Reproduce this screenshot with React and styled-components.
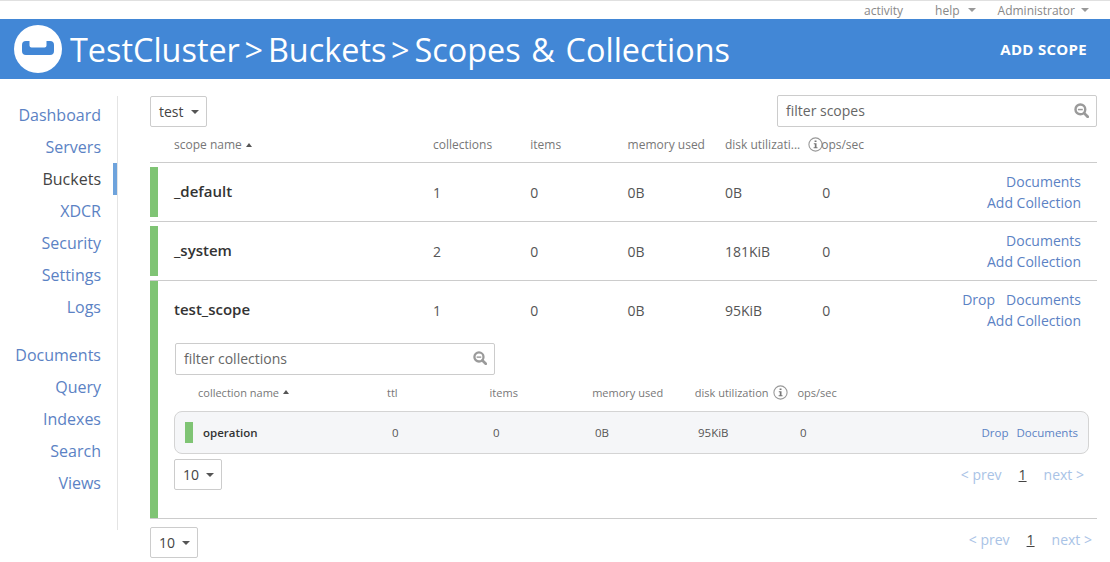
import React from "react";
import styled, { createGlobalStyle } from "styled-components";

const Global = createGlobalStyle`
  html, body { margin: 0; padding: 0; background: #fff; }
  body { font-family: "Open Sans", "Liberation Sans", sans-serif; color: #444; }
  * { box-sizing: border-box; }
`;
const Page = styled.div`width: 1110px; height: 562px; overflow: hidden; border-top: 1px solid #e0e0e0;`;
const TopBar = styled.div`height: 18px; display: flex; justify-content: flex-end; align-items: center; font-size: 12px; color: #888; padding-right: 21px;`;
const TopItem = styled.span`margin-left: ${p => p.$gap}px; display: inline-flex; align-items: center;`;
const Caret = styled.i`
  display: inline-block; width: 0; height: 0; margin-left: ${p => p.$ml ?? 7}px;
  border-left: 4px solid transparent; border-right: 4px solid transparent;
  border-top: 4px solid ${p => p.$c ?? "#555"};
`;
const SortCaret = styled.i`
  display: inline-block; width: 0; height: 0; margin-left: 4px;
  border-left: 3.5px solid transparent; border-right: 3.5px solid transparent; border-bottom: 4px solid #555;
`;
const Header = styled.header`height: 60px; background: #4287d6; display: flex; align-items: center; padding: 0 23px 0 14px; color: #fff;`;
const Title = styled.h1`margin: 0 0 0 8px; font-size: 32.4px; font-weight: 400; flex: 1; white-space: nowrap; word-spacing: 2.3px;`;
const Sep = styled.span`display: inline-block; width: 28px; text-align: center;`;
const AddScope = styled.span`font-size: 15px; font-weight: 700; letter-spacing: .3px;`;
const Body = styled.div`display: flex; padding-top: 17px;`;
const Side = styled.nav`width: 118px; height: 434px; border-right: 1px solid #e4e4e4; flex: none;`;
const Group = styled.div`margin-bottom: 16px;`;
const NavItem = styled.div`
  height: 32px; line-height: 38px; text-align: right; padding-right: 16px; font-size: 16px;
  color: ${p => p.$active ? "#444" : "#5b82c4"}; position: relative;
  ${p => p.$active && `&::after { content: ""; position: absolute; right: 0; top: 3px; width: 4px; height: 32px; background: #6ea3dc; }`}
`;
const Main = styled.main`margin-left: 32px; width: 947px;`;
const TopControls = styled.div`display: flex; justify-content: space-between; height: 31px;`;
const Select = styled.div`
  height: 31px; border: 1px solid #ccc; border-radius: 2px; display: inline-flex; align-items: center;
  padding: 0 7px 0 8px; font-size: 14px; color: #444; background: #fff;
`;
const Filter = styled.div`
  width: 320px; height: 32px; border: 1px solid #ccc; border-radius: 2px; display: flex; align-items: center;
  justify-content: space-between; padding: 0 7px 2px 8px; font-size: 14px; color: #666;
  margin-top: ${p => p.$mt ?? 0}px;
`;
const HeadRow = styled.div`
  display: grid; grid-template-columns: 259px repeat(5, 97.3px) 1fr; padding-left: 24px; height: 36px;
  align-items: center; font-size: 12px; color: #777; border-bottom: 1px solid #ccc;
`;
const HeadCell = styled.span`display: flex; align-items: center; white-space: nowrap; margin-left: ${p => p.$shift ?? 0}px;`;
const InfoWrap = styled.span`display: flex; margin-left: ${p => p.$ml}px;`;
const Scope = styled.section`display: flex; border-bottom: 1px solid #ccc; height: ${p => p.$h}px;`;
const GreenBar = styled.div`width: 8px; background: #7fc474; flex: none; margin: ${p => p.$flush ? "0" : "4px 0"};`;
const ScopeBody = styled.div`flex: 1; min-width: 0; padding: 4px 0 0 16px;`;
const ScopeRow = styled.div`
  display: grid; grid-template-columns: 259px repeat(5, 97.3px) 1fr; height: 50px; align-items: center; font-size: 14px; color: #555;
`;
const ScopeName = styled.span`font-size: 15px; font-weight: 600; color: #333; margin-top: -2px;`;
const Actions = styled.div`text-align: right; padding-right: 16px; font-size: 14px; color: #5b82c4; line-height: 21px; margin-top: -1px; white-space: nowrap;`;
const ActionLink = styled.span`margin-left: ${p => p.$gap ?? 11}px;`;
const SubFilter = styled.div`margin: 8px 0 0 1px; width: 320px;`;
const SubHead = styled.div`
  display: grid; grid-template-columns: 189px repeat(5, 102.6px); padding: 0 0 2px 24px; height: 36px; align-items: center; font-size: 11px; color: #777;
`;
const SubRow = styled.div`
  height: 43px; width: 915px; background: #f5f6f8; border: 1px solid #d4d4d4; border-radius: 8px; display: grid;
  grid-template-columns: 18px 189px 101px 102px 103px 102px 40px 1fr; align-items: center; font-size: 11.5px; color: #555; padding-left: 10px;
`;
const MiniBar = styled.span`width: 8px; height: 21px; background: #7fc474; display: block;`;
const CollName = styled.span`font-size: 11.5px; font-weight: 600; color: #333;`;
const SubActions = styled.div`text-align: right; padding-right: 10px; font-size: 11.5px; color: #5b82c4; white-space: nowrap;`;
const Footer = styled.div`display: flex; justify-content: space-between; align-items: flex-start; margin: ${p => p.$m};`;
const Pager = styled.div`font-size: 14px; color: #a9c3e6; display: flex; gap: 17px; padding-right: ${p => p.$pr}px; margin-top: ${p => p.$mt}px;`;
const Cur = styled.span`color: #444; text-decoration: underline;`;

const Search = ({ size = 15 }) => (
  <svg width={size} height={size} viewBox="0 0 16 16" fill="none" stroke="#9a9a9a">
    <circle cx="6.8" cy="6.8" r="5.2" strokeWidth="2.6" />
    <path d="M4.2 7h5.2" strokeWidth="1.6" />
    <path d="M10.8 10.8l3.800 3.800" strokeLinecap="round" strokeWidth="3" />
  </svg>
);
const Info = () => (
  <svg width="15" height="15" viewBox="0 0 15 15" fill="none">
    <circle cx="7.5" cy="7.5" r="6.6" stroke="#999" strokeWidth="1.1" />
    <path d="M6.6 3.400h1.900v1.700H6.600zM5.800 6.200h2.700v4h1v1.100H5.600v-1.100h1.200V7.300h-1z" fill="#777" />
  </svg>
);
const Logo = () => (
  <svg width="48" height="48" viewBox="0 0 48 48" style={{ flex: "none" }}>
    <circle cx="24" cy="24" r="24" fill="#fff" />
    <path d="M8 20a4 4 0 0 1 4-4h3.500v4.500a2 2 0 0 0 2 2h13a2 2 0 0 0 2-2V16H36a4 4 0 0 1 4 4v6a4 4 0 0 1-4 4H12a4 4 0 0 1-4-4z" fill="#4287d6" />
  </svg>
);

const scopes = [
  { name: "_default", c: 1, disk: "0B", h: 59 },
  { name: "_system", c: 2, disk: "181KiB", h: 59 },
];
const ScopeCells = ({ name, c, disk, drop }) => (
  <ScopeRow>
    <ScopeName>{name}</ScopeName>
    <span>{c}</span><span>0</span><span>0B</span><span>{disk}</span><span>0</span>
    <Actions>
      <div>{drop && <ActionLink>Drop</ActionLink>}<ActionLink>Documents</ActionLink></div>
      <div>Add Collection</div>
    </Actions>
  </ScopeRow>
);
const PageSize = () => <Select>10<Caret /></Select>;

export default function App() {
  return (
    <Page>
      <Global />
      <TopBar>
        <TopItem>activity</TopItem>
        <TopItem $gap={32}>help<Caret $ml={8} $c="#999" /></TopItem>
        <TopItem $gap={22}>Administrator<Caret $ml={6} $c="#999" /></TopItem>
      </TopBar>
      <Header>
        <Logo />
        <Title>TestCluster<Sep>&gt;</Sep>Buckets<Sep>&gt;</Sep>Scopes &amp; Collections</Title>
        <AddScope>ADD SCOPE</AddScope>
      </Header>
      <Body>
        <Side>
          <Group>
            {["Dashboard", "Servers", "Buckets", "XDCR", "Security", "Settings", "Logs"].map(n => (
              <NavItem key={n} $active={n === "Buckets"}>{n}</NavItem>
            ))}
          </Group>
          <Group>
            {["Documents", "Query", "Indexes", "Search", "Views"].map(n => <NavItem key={n}>{n}</NavItem>)}
          </Group>
        </Side>
        <Main>
          <TopControls>
            <Select>test<Caret /></Select>
            <Filter $mt={-1}>filter scopes<Search /></Filter>
          </TopControls>
          <HeadRow>
            <HeadCell>scope name<SortCaret /></HeadCell>
            <HeadCell>collections</HeadCell>
            <HeadCell>items</HeadCell>
            <HeadCell>memory used</HeadCell>
            <HeadCell>disk utilizati...<InfoWrap $ml={8}><Info /></InfoWrap></HeadCell>
            <HeadCell $shift={-1}>ops/sec</HeadCell>
          </HeadRow>
          {scopes.map(s => (
            <Scope key={s.name} $h={s.h}>
              <GreenBar />
              <ScopeBody><ScopeCells {...s} /></ScopeBody>
            </Scope>
          ))}
          <Scope $h={238}>
            <GreenBar $flush />
            <ScopeBody>
              <ScopeCells name="test_scope" c={1} disk="95KiB" drop />
              <SubFilter><Filter>filter collections<Search size={14} /></Filter></SubFilter>
              <SubHead>
                <HeadCell>collection name<SortCaret /></HeadCell>
                <HeadCell>ttl</HeadCell>
                <HeadCell>items</HeadCell>
                <HeadCell>memory used</HeadCell>
                <HeadCell>disk utilization<InfoWrap $ml={4}><Info /></InfoWrap></HeadCell>
                <HeadCell>ops/sec</HeadCell>
              </SubHead>
              <SubRow>
                <MiniBar />
                <CollName>operation</CollName>
                <span>0</span><span>0</span><span>0B</span><span>95KiB</span><span>0</span>
                <SubActions><ActionLink $gap={8}>Drop</ActionLink><ActionLink $gap={8}>Documents</ActionLink></SubActions>
              </SubRow>
              <Footer $m="5px 0 0 0">
                <PageSize />
                <Pager $pr={13} $mt={6}><span>&lt; prev</span><Cur>1</Cur><span>next &gt;</span></Pager>
              </Footer>
            </ScopeBody>
          </Scope>
          <Footer $m="8px 0 0 0">
            <PageSize />
            <Pager $pr={5} $mt={3}><span>&lt; prev</span><Cur>1</Cur><span>next &gt;</span></Pager>
          </Footer>
        </Main>
      </Body>
    </Page>
  );
}
